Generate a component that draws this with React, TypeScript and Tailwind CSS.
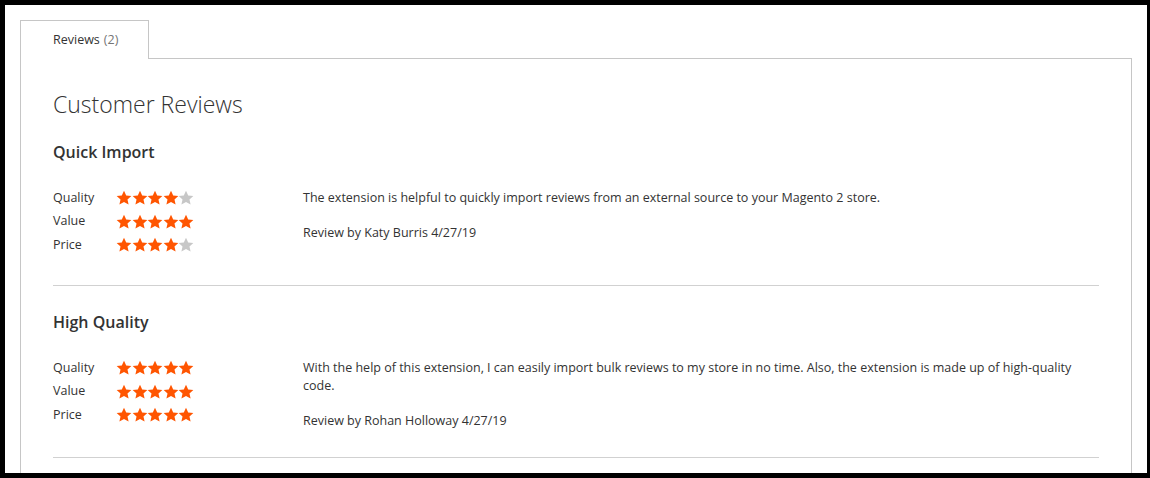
type Rating = { label: string; value: number }

interface Review {
  title: string
  ratings: Rating[]
  text: string
  author: string
  date: string
}

const reviews: Review[] = [
  {
    title: "Quick Import",
    ratings: [
      { label: "Quality", value: 4 },
      { label: "Value", value: 5 },
      { label: "Price", value: 4 },
    ],
    text: "The extension is helpful to quickly import reviews from an external source to your Magento 2 store.",
    author: "Katy Burris",
    date: "4/27/19",
  },
  {
    title: "High Quality",
    ratings: [
      { label: "Quality", value: 5 },
      { label: "Value", value: 5 },
      { label: "Price", value: 5 },
    ],
    text: "With the help of this extension, I can easily import bulk reviews to my store in no time. Also, the extension is made up of high-quality code.",
    author: "Rohan Holloway",
    date: "4/27/19",
  },
]

function Star({ filled }: { filled: boolean }) {
  return (
    <svg viewBox="0 0 24 24" className={filled ? "w-[16px] h-[16px] fill-[#ff5501]" : "w-[16px] h-[16px] fill-[#c7c7c7]"}>
      <path d="M12 1.2l3.3 7.1 7.7.8-5.8 5.2 1.7 7.6L12 18l-6.9 3.9 1.7-7.6L1 9.1l7.7-.8z" />
    </svg>
  )
}

function Stars({ value }: { value: number }) {
  return (
    <div className="flex -space-x-[0.5px]">
      {[1, 2, 3, 4, 5].map((i) => (
        <Star key={i} filled={i <= value} />
      ))}
    </div>
  )
}

function ReviewItem({ review }: { review: Review }) {
  return (
    <li className="border-b border-[#d1d1d1] pt-[4px] pb-[27px] mb-[21px] last:mb-0">
      <div className="text-[16px] font-semibold text-[#333] leading-[22px]">{review.title}</div>
      <div className="flex mt-[26px]">
        <div className="w-[250px] shrink-0 flex flex-col gap-[5.5px] pb-[4px]">
          {review.ratings.map((r) => (
            <div key={r.label} className="flex items-center h-[18px]">
              <span className="w-[63px] text-[12.5px] text-[#333]">{r.label}</span>
              <Stars value={r.value} />
            </div>
          ))}
        </div>
        <div className="flex-1 text-[12.5px] leading-[18px] text-[#333]">
          <p>{review.text}</p>
          <p className="mt-[17px]">
            Review by {review.author} {review.date}
          </p>
        </div>
      </div>
    </li>
  )
}

export default function App() {
  return (
    <div className="h-[478px] w-[1150px] bg-black pt-[5px] pl-[5px] pr-[3px] pb-[5px] overflow-hidden font-['Open_Sans',sans-serif]">
      <div className="h-full bg-white px-[15px] pt-[15px] overflow-hidden">
        <div className="flex">
          <div className="relative z-10 -mb-px border border-b-0 border-[#c6c6c6] bg-white h-[39px] w-[129px] pl-[32px] flex items-center text-[12.5px] text-[#333]">
            Reviews <span className="ml-[4px] text-[#757575]">(2)</span>
          </div>
        </div>
        <div className="border border-[#c6c6c6] px-[32px] pt-[30px] h-[500px]">
          <h2 className="text-[23px] font-light text-[#333] leading-[30px]">Customer Reviews</h2>
          <ol className="mt-[18px]">
            {reviews.map((r) => (
              <ReviewItem key={r.title} review={r} />
            ))}
          </ol>
        </div>
      </div>
    </div>
  )
}
